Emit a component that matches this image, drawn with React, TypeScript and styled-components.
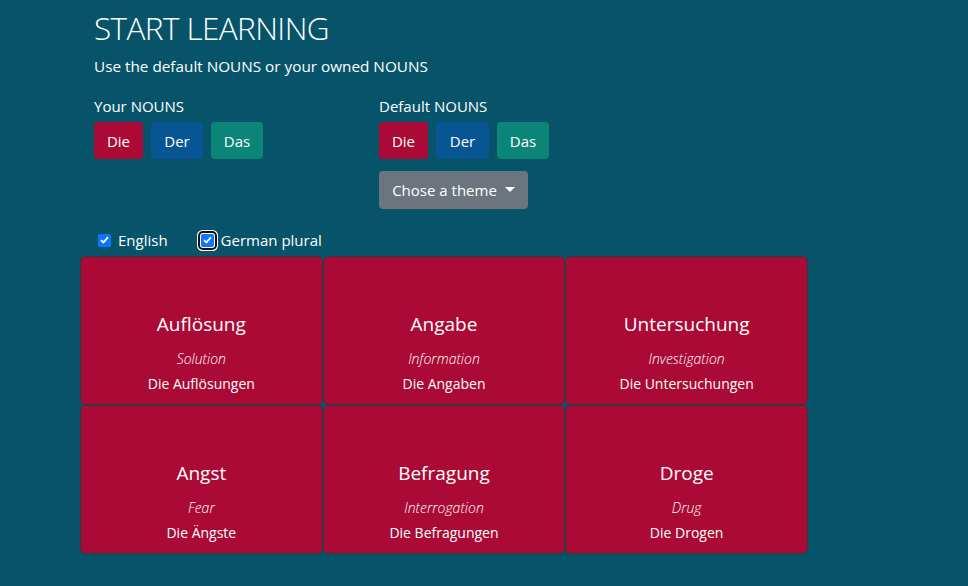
import React from "react";
import styled, { createGlobalStyle } from "styled-components";

const Global = createGlobalStyle`
  html, body { margin: 0; padding: 0; }
  body {
    background: #07546a;
    font-family: "Open Sans", "Noto Sans", sans-serif;
    color: #fff;
  }
`;

const Page = styled.div`
  min-height: 586px;
  background: #07546a;
  padding: 0 0 0 80px;
  box-sizing: border-box;
`;

const Header = styled.div`
  padding: 9px 0 0 14px;
`;

const Title = styled.h1`
  margin: 0;
  font-size: 31.5px;
  font-weight: 300;
  line-height: 38px;
  letter-spacing: -0.6px;
`;

const Subtitle = styled.p`
  margin: 8px 0 0;
  font-size: 15.3px;
  line-height: 22px;
`;

const Groups = styled.div`
  display: grid;
  grid-template-columns: 285px auto;
  margin-top: 18px;
`;

const Group = styled.div`
  display: flex;
  flex-direction: column;
  align-items: flex-start;
`;

const Label = styled.div`
  font-size: 15px;
  line-height: 22px;
`;

const BtnRow = styled.div`
  display: flex;
  gap: 8px;
  margin-top: 5px;
`;

const colors: Record<string, string> = {
  Die: "#aa0a35",
  Der: "#075593",
  Das: "#0b8577",
};

const ArticleBtn = styled.button<{ $bg: string; $w: number }>`
  background: ${(p) => p.$bg};
  color: #fff;
  border: none;
  border-radius: 4px;
  height: 37px;
  width: ${(p) => p.$w}px;
  font-family: inherit;
  font-size: 15px;
  padding: 0;
  cursor: pointer;
`;

const ThemeBtn = styled.button`
  margin-top: 12px;
  background: #6c757d;
  color: #fff;
  border: none;
  border-radius: 4px;
  height: 38px;
  width: 149px;
  font-family: inherit;
  font-size: 15px;
  display: flex;
  align-items: center;
  justify-content: center;
  gap: 8px;
  padding: 0;
`;

const Caret = styled.span`
  width: 0;
  height: 0;
  border-left: 5px solid transparent;
  border-right: 5px solid transparent;
  border-top: 5px solid #fff;
  margin-top: -2px;
`;

const Checks = styled.div`
  display: flex;
  align-items: center;
  margin: 20px 0 0 18px;
  height: 22px;
`;

const CheckLabel = styled.label<{ $gap: number }>`
  display: flex;
  align-items: center;
  font-size: 15px;
  margin-right: ${(p) => p.$gap}px;
`;

const Box = styled.span<{ $focus?: boolean }>`
  width: 13px;
  height: 13px;
  border-radius: 2px;
  background: #0d76f7;
  display: inline-flex;
  align-items: center;
  justify-content: center;
  margin-right: 7px;
  ${(p) =>
    p.$focus
      ? `box-shadow: 0 0 0 1px #fff, 0 0 0 3px #111, 0 0 0 4px #fff; margin-left: 3px; margin-right: 7px;`
      : ""}
`;

const Grid = styled.div`
  display: grid;
  grid-template-columns: repeat(3, 242.67px);
  margin-top: 5px;
`;

const Card = styled.div`
  height: 149px;
  box-sizing: border-box;
  background: #aa0a35;
  border: 1px solid #323a3e;
  border-radius: 5px;
  display: flex;
  flex-direction: column;
  align-items: center;
  padding-top: 55px;
`;

const Word = styled.div`
  font-size: 19px;
  line-height: 24px;
`;

const Trans = styled.div`
  font-size: 14px;
  font-style: italic;
  font-weight: 300;
  line-height: 22px;
  margin-top: 12px;
`;

const Plural = styled.div`
  font-size: 14px;
  line-height: 24px;
  margin-top: 2px;
`;

const Check = () => (
  <svg width="9" height="8" viewBox="0 0 9 8">
    <path d="M1 4.2 L3.4 6.5 L8 1.2" stroke="#fff" strokeWidth="1.8" fill="none" />
  </svg>
);

const nouns = [
  ["Auflösung", "Solution", "Die Auflösungen"],
  ["Angabe", "Information", "Die Angaben"],
  ["Untersuchung", "Investigation", "Die Untersuchungen"],
  ["Angst", "Fear", "Die Ängste"],
  ["Befragung", "Interrogation", "Die Befragungen"],
  ["Droge", "Drug", "Die Drogen"],
];

const yourWidths: Record<string, number> = { Die: 49, Der: 52, Das: 52 };
const defaultWidths: Record<string, number> = { Die: 49, Der: 53, Das: 52 };

export default function App() {
  return (
    <Page>
      <Global />
      <Header>
        <Title>START LEARNING</Title>
        <Subtitle>Use the default NOUNS or your owned NOUNS</Subtitle>
        <Groups>
          <Group>
            <Label>Your NOUNS</Label>
            <BtnRow>
              {["Die", "Der", "Das"].map((a) => (
                <ArticleBtn key={a} $bg={colors[a]} $w={yourWidths[a]}>
                  {a}
                </ArticleBtn>
              ))}
            </BtnRow>
          </Group>
          <Group>
            <Label>Default NOUNS</Label>
            <BtnRow>
              {["Die", "Der", "Das"].map((a) => (
                <ArticleBtn key={a} $bg={colors[a]} $w={defaultWidths[a]}>
                  {a}
                </ArticleBtn>
              ))}
            </BtnRow>
            <ThemeBtn>
              Chose a theme <Caret />
            </ThemeBtn>
          </Group>
        </Groups>
      </Header>
      <Checks>
        <CheckLabel $gap={30}>
          <Box>
            <Check />
          </Box>
          English
        </CheckLabel>
        <CheckLabel $gap={0}>
          <Box $focus>
            <Check />
          </Box>
          German plural
        </CheckLabel>
      </Checks>
      <Grid>
        {nouns.map(([w, t, p]) => (
          <Card key={w}>
            <Word>{w}</Word>
            <Trans>{t}</Trans>
            <Plural>{p}</Plural>
          </Card>
        ))}
      </Grid>
    </Page>
  );
}
